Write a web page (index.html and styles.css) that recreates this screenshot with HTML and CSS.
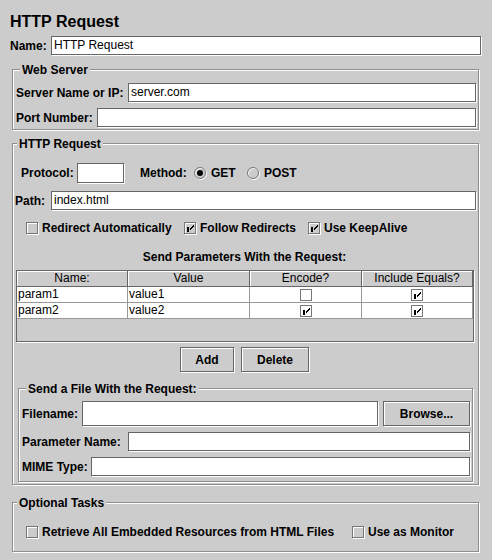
FILE: index.html
```html
<!DOCTYPE html>
<html>
<head>
<meta charset="utf-8">
<title>HTTP Request</title>
<link rel="stylesheet" href="styles.css">
</head>
<body>
<div class="app">
  <div class="title">HTTP Request</div>

  <div class="row name-row">
    <span class="lbl w-name">Name:</span>
    <div class="tf">HTTP Request</div>
  </div>

  <div class="group ws">
    <div class="gtitle">Web Server</div>
    <div class="row r1">
      <span class="lbl w-server">Server Name or IP:</span>
      <div class="tf">server.com</div>
    </div>
    <div class="row r2">
      <span class="lbl w-port">Port Number:</span>
      <div class="tf"></div>
    </div>
  </div>

  <div class="group http">
    <div class="gtitle">HTTP Request</div>
    <div class="row proto-row">
      <span class="lbl w-proto">Protocol:</span>
      <div class="tf tf-proto"></div>
      <span class="lbl w-method">Method:</span>
      <span class="rb-item w-get">
        <svg class="rb" width="13" height="13" viewBox="0 0 13 13"><circle cx="7" cy="7" r="5.5" fill="none" stroke="#fff"/><circle cx="6" cy="6" r="5.5" fill="none" stroke="#777"/><circle cx="6" cy="6" r="3" fill="#000"/></svg>
        <span class="lbl">GET</span>
      </span>
      <span class="rb-item">
        <svg class="rb" width="13" height="13" viewBox="0 0 13 13"><circle cx="7" cy="7" r="5.5" fill="none" stroke="#fff"/><circle cx="6" cy="6" r="5.5" fill="none" stroke="#777"/></svg>
        <span class="lbl">POST</span>
      </span>
    </div>
    <div class="row path-row">
      <span class="lbl w-path">Path:</span>
      <div class="tf">index.html</div>
    </div>
    <div class="row cb-row">
      <span class="cbi w-redir"><span class="cb"></span><span class="lbl">Redirect Automatically</span></span>
      <span class="cbi w-follow"><span class="cb"><svg class="chk" width="10" height="10" viewBox="0 0 10 10" shape-rendering="crispEdges"><rect x="2" y="4" width="2" height="5" fill="#000"/><path d="M8.5 2.5 L4.5 6.5 M8.5 3.5 L4.5 7.5" stroke="#000" fill="none"/></svg></span><span class="lbl">Follow Redirects</span></span>
      <span class="cbi"><span class="cb"><svg class="chk" width="10" height="10" viewBox="0 0 10 10" shape-rendering="crispEdges"><rect x="2" y="4" width="2" height="5" fill="#000"/><path d="M8.5 2.5 L4.5 6.5 M8.5 3.5 L4.5 7.5" stroke="#000" fill="none"/></svg></span><span class="lbl">Use KeepAlive</span></span>
    </div>
    <div class="params-title">Send Parameters With the Request:</div>
    <div class="tbl">
      <div class="tr thead">
        <div class="th">Name:</div>
        <div class="th">Value</div>
        <div class="th">Encode?</div>
        <div class="th">Include Equals?</div>
      </div>
      <div class="tr">
        <div class="td">param1</div>
        <div class="td">value1</div>
        <div class="td td-c"><span class="cb"></span></div>
        <div class="td td-c"><span class="cb"><svg class="chk" width="10" height="10" viewBox="0 0 10 10" shape-rendering="crispEdges"><rect x="2" y="4" width="2" height="5" fill="#000"/><path d="M8.5 2.5 L4.5 6.5 M8.5 3.5 L4.5 7.5" stroke="#000" fill="none"/></svg></span></div>
      </div>
      <div class="tr">
        <div class="td">param2</div>
        <div class="td">value2</div>
        <div class="td td-c"><span class="cb"><svg class="chk" width="10" height="10" viewBox="0 0 10 10" shape-rendering="crispEdges"><rect x="2" y="4" width="2" height="5" fill="#000"/><path d="M8.5 2.5 L4.5 6.5 M8.5 3.5 L4.5 7.5" stroke="#000" fill="none"/></svg></span></div>
        <div class="td td-c"><span class="cb"><svg class="chk" width="10" height="10" viewBox="0 0 10 10" shape-rendering="crispEdges"><rect x="2" y="4" width="2" height="5" fill="#000"/><path d="M8.5 2.5 L4.5 6.5 M8.5 3.5 L4.5 7.5" stroke="#000" fill="none"/></svg></span></div>
      </div>
    </div>
    <div class="btn-row">
      <div class="btn b-add">Add</div>
      <div class="btn b-del">Delete</div>
    </div>

    <div class="group file">
      <div class="gtitle">Send a File With the Request:</div>
      <div class="row f1">
        <span class="lbl w-fname">Filename:</span>
        <div class="tf tf-file"></div>
        <div class="btn b-browse">Browse...</div>
      </div>
      <div class="row f2">
        <span class="lbl w-pname">Parameter Name:</span>
        <div class="tf"></div>
      </div>
      <div class="row f2">
        <span class="lbl w-mime">MIME Type:</span>
        <div class="tf"></div>
      </div>
    </div>
  </div>

  <div class="group opt">
    <div class="gtitle">Optional Tasks</div>
    <div class="row opt-row">
      <span class="cbi w-retr"><span class="cb"></span><span class="lbl">Retrieve All Embedded Resources from HTML Files</span></span>
      <span class="cbi"><span class="cb"></span><span class="lbl">Use as Monitor</span></span>
    </div>
  </div>
</div>
</body>
</html>
```

FILE: styles.css
```css
* { box-sizing: border-box; }
html, body { margin: 0; padding: 0; background: #cccccc; }
body {
  font-family: "Liberation Sans", Arial, sans-serif;
  font-size: 12px;
  color: #000;
}
.app { width: 492px; height: 560px; overflow: hidden; }

.title {
  font-weight: bold;
  font-size: 16px;
  line-height: 20px;
  height: 32px;
  padding: 12px 0 0 10px;
}

.row { display: flex; align-items: center; }
.lbl { font-weight: bold; white-space: nowrap; flex: 0 0 auto; }

.tf {
  flex: 1 1 auto;
  height: 19px;
  background: #fff;
  border: 1px solid #666;
  box-shadow: 1px 1px 0 #fff;
  line-height: 17px;
  padding-left: 2px;
  white-space: nowrap;
  overflow: hidden;
}

.name-row { margin-top: 4px; padding: 0 11px 0 10px; }
.w-name { width: 41px; }

/* titled (etched) groups */
.group {
  margin: 0 13px 0 12px;
  border: 1px solid #8e8e8e;
  box-shadow: inset 1px 1px 0 #fff, 1px 1px 0 #fff;
}
.gtitle {
  font-weight: bold;
  line-height: 14px;
  height: 14px;
  width: max-content;
  margin: -7px 0 0 4px;
  padding: 0 2px;
  background: #cccccc;
}

/* Web Server */
.ws { margin-top: 14px; padding: 0 2px 2px 3px; }
.ws .r1 { margin-top: 6px; }
.ws .r2 { margin-top: 6px; }
.w-server { width: 112px; }
.w-port { width: 81px; }

/* HTTP Request */
.http { margin-top: 13px; padding: 0 2px 2px 0; }
.proto-row { margin-top: 12px; height: 20px; padding-left: 8px; }
.w-proto { width: 56px; }
.tf-proto { flex: 0 0 47px; height: 20px; }
.w-method { width: 54px; margin-left: 16px; }
.rb-item { display: flex; align-items: center; gap: 4px; flex: 0 0 auto; }
.rb { display: block; flex: 0 0 13px; }
.w-get { width: 53px; }

.path-row { margin-top: 8px; padding-left: 2px; }
.w-path { width: 36px; }

.cb-row { margin-top: 10px; height: 16px; padding-left: 13px; }
.cbi { display: flex; align-items: center; gap: 4px; flex: 0 0 auto; }
.w-redir { width: 158px; }
.w-follow { width: 124px; }
.cb {
  display: block;
  flex: 0 0 12px;
  width: 12px;
  height: 12px;
  border: 1px solid #777;
  box-shadow: inset 1px 1px 0 #fff, 1px 1px 0 #fff;
}
.chk { display: block; }

.params-title {
  margin-top: 14px;
  font-weight: bold;
  line-height: 14px;
  text-align: center;
}

/* table */
.tbl {
  margin: 6px 2px 0 3px;
  height: 72px;
  border: 1px solid #666;
  box-shadow: 1px 1px 0 #fff;
  background: #cccccc;
}
.tr {
  display: grid;
  grid-template-columns: 111px 122px 112px 111px;
}
.th {
  height: 16px;
  line-height: 15px;
  text-align: center;
  border-right: 1px solid #666;
  border-bottom: 1px solid #666;
  box-shadow: inset 1px 1px 0 #fff;
  white-space: nowrap;
}
.td {
  height: 16px;
  line-height: 15px;
  background: #fff;
  border-right: 1px solid #999;
  border-bottom: 1px solid #999;
  padding-left: 1px;
  white-space: nowrap;
}
.td-c { display: flex; align-items: center; justify-content: center; padding-left: 0; }

/* buttons */
.btn-row { display: flex; justify-content: center; gap: 7px; margin-top: 5px; }
.btn {
  height: 25px;
  display: flex;
  align-items: center;
  justify-content: center;
  font-weight: bold;
  background: #cccccc;
  border: 1px solid #666;
  box-shadow: inset 1px 1px 0 #fff, 1px 1px 0 #fff;
  flex: 0 0 auto;
}
.b-add { width: 54px; }
.b-del { width: 68px; }
.b-browse { width: 87px; margin-left: 5px; }

/* file group */
.group.file { margin: 16px 3px 0 5px; padding: 0 2px 5px 3px; }
.file .f1 { margin-top: 5px; }
.tf-file { height: 25px; line-height: 23px; }
.file .f2 { margin-top: 6px; }
.w-fname { width: 60px; }
.w-pname { width: 106px; }
.w-mime { width: 69px; }

/* optional tasks */
.opt { margin-top: 17px; padding: 0 0 11px 0; }
.opt-row { margin-top: 14px; height: 16px; padding-left: 13px; }
.w-retr { width: 326px; }
```
